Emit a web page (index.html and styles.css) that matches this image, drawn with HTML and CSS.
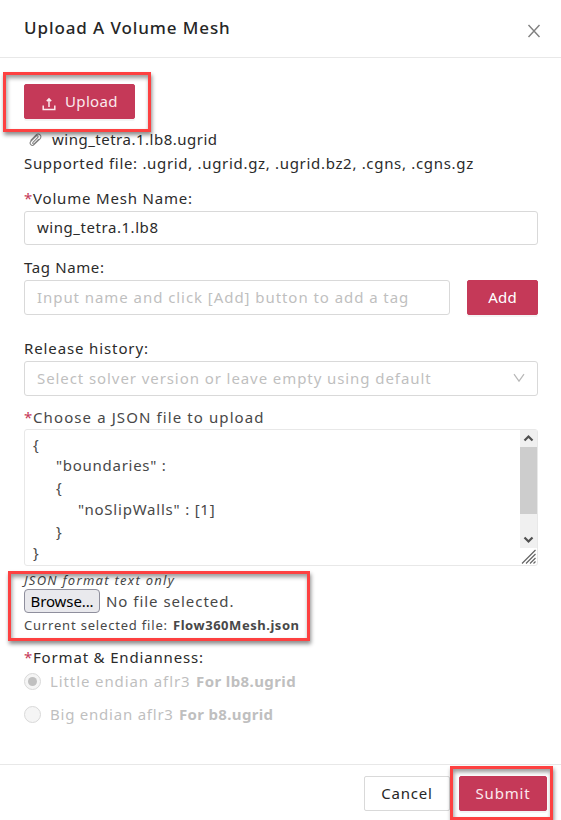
FILE: index.html
```
<!DOCTYPE html>
<html lang="en">
<head>
<meta charset="utf-8">
<title>Upload A Volume Mesh</title>
<link rel="stylesheet" href="styles.css">
</head>
<body>
<div class="modal">
  <header class="head">
    <h1>Upload A Volume Mesh</h1>
    <svg class="close" viewBox="0 0 14 14"><path d="M1.5 1L12.5 13M12.5 1L1.5 13"/></svg>
  </header>
  <main class="body">
    <div class="upload-wrap">
      <button class="btn primary upload"><svg class="up-icon" viewBox="0 0 14 14"><path d="M1.2 8.5V12.4H12.8V8.5M7 10V2M4.8 4.1L7 1.9L9.2 4.1"/></svg><span>Upload</span></button>
      <i class="mark mark-upload"></i>
    </div>
    <div class="file"><svg class="clip" viewBox="0 0 14 14"><path d="M4.3 9.6L9.3 4.5C10.7 3.2 8.9 1.5 7.6 2.8L2 8.5C-0.3 10.9 3 14.3 5.4 12L11.6 6C15 2.4 10.6-1.2 7.4 1.8L1.6 7.6M4.3 9.6C3.3 10.6 4.7 12 5.7 11L10.6 6"/></svg><span class="t-file">wing_tetra.1.lb8.ugrid</span></div>
    <div class="supported">Supported file: .ugrid, .ugrid.gz, .ugrid.bz2, .cgns, .cgns.gz</div>

    <label class="label name-label"><b class="req">*</b><span class="t-name">Volume Mesh Name:</span></label>
    <div class="input name-input"><span class="t-value">wing_tetra.1.lb8</span></div>

    <label class="label tag-label"><span class="t-tag">Tag Name:</span></label>
    <div class="row">
      <div class="input tag-input"><span class="ph t-tagph">Input name and click [Add] button to add a tag</span></div>
      <button class="btn primary add">Add</button>
    </div>

    <label class="label rel-label"><span class="t-rel">Release history:</span></label>
    <div class="input select"><span class="ph t-select">Select solver version or leave empty using default</span><svg class="chev" viewBox="0 0 12 10"><path d="M1 1.2L6 8.2L11 1.2"/></svg></div>

    <label class="label json-label soft"><b class="req">*</b><span class="t-json">Choose a JSON file to upload</span></label>
    <div class="area">
      <div class="code">
        <div>{</div>
        <div class="in1 t-bound">"boundaries" :</div>
        <div class="in1">{</div>
        <div class="in2 t-walls">"noSlipWalls" : [1]</div>
        <div class="in1">}</div>
        <div>}</div>
      </div>
      <div class="side">
        <div class="bar">
          <svg class="arrow" viewBox="0 0 17 17"><path d="M4.5 10.5L8.5 6.5L12.5 10.5"/></svg>
          <div class="thumb"></div>
          <svg class="arrow" viewBox="0 0 17 17"><path d="M4.5 6.5L8.5 10.5L12.5 6.5"/></svg>
        </div>
        <svg class="grip" viewBox="0 0 17 17"><path d="M2 15.5L15.5 2M6 15.5L15.5 6M10 15.5L15.5 10M13.5 15.5L15.5 13.5"/></svg>
      </div>
    </div>
    <div class="picker soft">
      <i class="mark mark-picker"></i>
      <div class="hint">JSON format text only</div>
      <div class="browse-row"><button class="browse">Browse...</button><span class="t-none">No file selected.</span></div>
      <div class="current"><span class="t-cur">Current selected file:</span><strong>Flow360Mesh.json</strong></div>
    </div>

    <div class="label fmt-label"><b class="req">*</b><span class="t-fmt">Format &amp; Endianness:</span></div>
    <div class="radio"><i class="dot on"></i><span class="t-little">Little endian aflr3</span><strong class="s-little">For lb8.ugrid</strong></div>
    <div class="radio second"><i class="dot"></i><span class="t-big">Big endian aflr3</span><strong class="s-big">For b8.ugrid</strong></div>
  </main>
  <footer class="foot">
    <button class="btn cancel">Cancel</button>
    <div class="submit-wrap"><button class="btn primary submit">Submit</button><i class="mark mark-submit"></i></div>
  </footer>
</div>
</body>
</html>
```
FILE: styles.css
```
* { box-sizing: border-box; }
html, body { margin: 0; height: 820px; overflow: hidden; background: #fff; }
body { font: 15px/22px "Noto Sans", "Open Sans", sans-serif; color: #2b2b2b; white-space: nowrap; }
.modal { width: 561px; height: 820px; display: flex; flex-direction: column; }
svg { fill: none; stroke: currentColor; display: block; flex: none; }
.head { height: 58px; flex: none; border-bottom: 1px solid #e8e8e8; padding: 0 20px 0 24px; display: flex; justify-content: space-between; align-items: center; }
h1 { margin: 0 0 2px; font-size: 17px; font-weight: 500; letter-spacing: .9px; color: #262626; }
.close { width: 14px; height: 14px; margin: 4px 0 0; color: #808080; stroke-width: 1.4; }
.body { flex: 1; padding: 26px 23px 0 24px; }
.btn { font: 400 15px/1 "Noto Sans", sans-serif; height: 35px; border: 1px solid #d9d9d9; border-radius: 2px; background: #fff; color: #262626; padding: 0 0 1px; display: flex; align-items: center; justify-content: center; }
.primary { background: #c53958; border-color: #c53958; color: #fff; box-shadow: 0 2px 0 rgba(0,0,0,.045); }
.upload-wrap { position: relative; width: 111px; height: 35px; }
.upload { width: 111px; justify-content: flex-start; padding-left: 17px; letter-spacing: .35px; color: #fbe9ed; }
.up-icon { width: 14px; height: 14px; margin: 5px 9px 0 0; stroke-width: 1.5; }
.mark { position: absolute; z-index: 2; border: 3px solid #fd4141; box-shadow: 1px 3px 4px rgba(0,0,0,.45), inset 1px 3px 4px rgba(0,0,0,.4); pointer-events: none; }
.mark-upload { left: -21px; top: -12px; width: 148px; height: 60px; }
.file { height: 24px; margin-top: 9px; padding-left: 5px; display: flex; align-items: center; }
.clip { width: 13px; height: 14px; margin-right: 10px; color: #808080; stroke-width: 1.1; }
.t-file { letter-spacing: .5px; padding-bottom: 2px; }
.supported { letter-spacing: .68px; height: 24px; }
.label { display: flex; height: 24px; align-items: center; padding-bottom: 2px; }
.req { font-weight: 400; color: #c53958; width: 9px; flex: none; }
.name-label { margin-top: 11px; }
.t-name { letter-spacing: .81px; }
.input { height: 35px; border: 1px solid #d9d9d9; border-radius: 3px; padding: 0 12px 2px; display: flex; align-items: center; }
.name-input { height: 34px; }
.t-value { letter-spacing: .55px; }
.tag-label { margin-top: 11px; }
.t-tag { letter-spacing: .62px; }
.row { display: flex; justify-content: space-between; }
.tag-input { width: 426px; }
.t-tagph { letter-spacing: .94px; }
.ph { color: #bfbfbf; }
.add { width: 71px; letter-spacing: .2px; }
.rel-label { margin-top: 22px; }
.t-rel { letter-spacing: .88px; }
.select { justify-content: space-between; }
.t-select { letter-spacing: .92px; }
.chev { width: 12px; height: 10px; color: #b8b8b8; stroke-width: 1.2; margin-top: 1px; }
.json-label { margin-top: 10px; height: 23px; }
.soft { color: #484848; }
.t-json { letter-spacing: 1.1px; }
.area { height: 137px; border: 1px solid #e8e8e8; border-radius: 3px; display: flex; justify-content: space-between; color: #484848; }
.code { line-height: 21.8px; padding: 3.5px 0 0 8px; }
.in1 { padding-left: 23px; }
.in2 { padding-left: 45px; }
.t-bound { letter-spacing: .72px; }
.t-walls { letter-spacing: .78px; }
.side { width: 17px; }
.bar { height: 118px; background: #f0f0f0; display: flex; flex-direction: column; }
.bar .arrow:last-child { margin-top: auto; }
.arrow { width: 17px; height: 17px; color: #505050; stroke-width: 2.2; }
.thumb { height: 67px; background: #cdcdcd; }
.grip { width: 17px; height: 17px; color: #666; stroke-width: 1.2; }
.picker { position: relative; height: 73px; }
.mark-picker { left: -16px; top: 5px; width: 302px; height: 70px; }
.hint { font-size: 13px; line-height: 20px; height: 23px; padding-top: 4px; font-style: italic; letter-spacing: 1.28px; }
.browse-row { display: flex; align-items: center; height: 24px; }
.browse { width: 76px; height: 24px; padding: 0; border: 1px solid #8f8f9d; border-radius: 4px; background: #e9e9ed; color: #000; font: 15px/20px "Noto Sans", sans-serif; letter-spacing: -.11px; margin-right: 6px; }
.t-none { letter-spacing: .97px; }
.current { font-size: 13px; line-height: 24px; display: flex; }
.t-cur { width: 149px; letter-spacing: .81px; }
.current strong { font-weight: 700; letter-spacing: .54px; }
.fmt-label { margin-top: 7px; }
.t-fmt { letter-spacing: .83px; }
.radio { height: 24px; display: flex; align-items: center; color: #bfbfbf; }
.radio span, .radio strong { padding-bottom: 2px; }
.second { margin-top: 9px; }
.dot { width: 17px; height: 17px; margin: 0 9px 1px 0; border: 1px solid #d9d9d9; border-radius: 50%; background: #f5f5f5; display: grid; place-items: center; }
.on::after { content: ""; width: 9px; height: 9px; border-radius: 50%; background: #c0c0c0; }
.t-little { width: 146px; letter-spacing: .9px; }
.t-big { width: 129px; letter-spacing: .77px; }
.s-little { letter-spacing: .4px; }
.s-big { letter-spacing: .33px; }
.foot { height: 56px; flex: none; border-top: 1px solid #e8e8e8; padding: 11px 14px 0 0; display: flex; justify-content: flex-end; gap: 9px; }
.cancel { width: 86px; letter-spacing: .8px; }
.submit-wrap { position: relative; width: 88px; }
.submit { width: 88px; letter-spacing: .8px; color: #fbe9ed; }
.mark-submit { left: -9px; top: -10px; width: 103px; height: 54px; }
```
